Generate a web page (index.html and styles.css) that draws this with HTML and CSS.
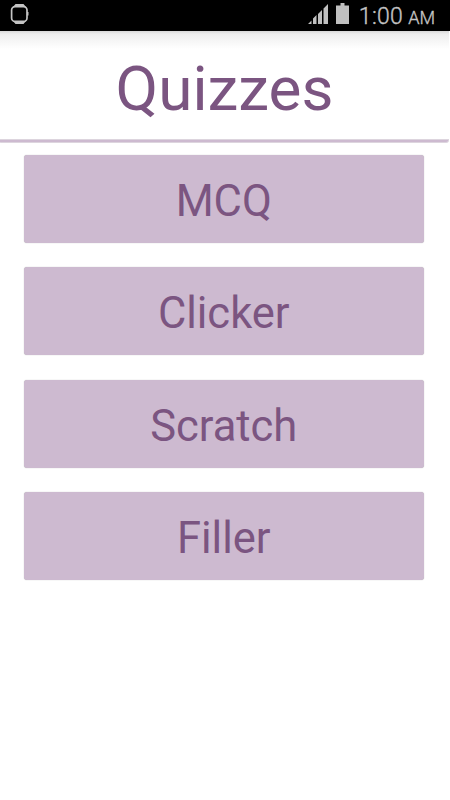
FILE: index.html
```html
<!DOCTYPE html>
<html lang="en">
<head>
<meta charset="utf-8">
<title>Quizzes</title>
<link rel="stylesheet" href="styles.css">
</head>
<body>
<div class="status">
  <svg class="watch" width="20" height="20" viewBox="0 0 20 20"><path d="M6.500 0h8L17 3H4zM4 17h13l-2.500 3h-8zM18 8h1.500v3.500H18z" fill="#c4c4c4"/><rect x="2.600" y="2.600" width="15.400" height="14.800" rx="3.500" fill="#000" stroke="#c4c4c4" stroke-width="1.700"/></svg>
  <svg class="signal" width="20" height="20" viewBox="0 0 20 20"><path d="M0 20l3.500-3.500V20zM5 20v-5.500l3.500-3.500v9zM10 20V10l4-4v14zM15.500 20V4.500L20 0v20z" fill="#c0c0c0"/></svg>
  <svg class="battery" width="13" height="21" viewBox="0 0 13 21"><path d="M4.500 0h4v2.500H13V21H0V2.500h4.500z" fill="#c0c0c0"/></svg>
  <span class="clock">1:00</span><span class="ampm">AM</span>
</div>
<header class="title"><h1>Quizzes</h1></header>
<div class="rule"></div>
<main class="list">
  <button class="item">MCQ</button>
  <button class="item">Clicker</button>
  <button class="item">Scratch</button>
  <button class="item">Filler</button>
</main>
</body>
</html>
```

FILE: styles.css
```css
* { box-sizing: border-box; }
body { margin: 0; width: 450px; height: 800px; overflow: hidden; background: #fff; font-family: Roboto, sans-serif; }
.status { height: 31px; background: #000; display: flex; align-items: baseline; padding: 3px 15px 0 9px; color: #c4c4c4; }
.signal { margin-left: auto; }
.battery { margin: 0 9.5px 0 8px; }
.clock { font-size: 23px; font-weight: 300; line-height: 20px; letter-spacing: .3px; -webkit-text-stroke: .35px #c4c4c4; }
.ampm { font-size: 18px; font-weight: 300; margin-left: 5px; line-height: 20px; -webkit-text-stroke: .35px #c4c4c4; }
.title { width: 449px; height: 108px; padding-top: 6px; background: linear-gradient(#d8d8d8 0, #ededed 3px, #f6f6f6 10px, #fff 18px); display: flex; align-items: center; justify-content: center; }
h1 { margin: 0; font-size: 62px; font-weight: 400; line-height: 75px; color: #7b5581; }
.rule { width: 449px; height: 4px; border: 1px solid #ddd5de; border-left: 0; border-radius: 0 0 3px 1px; background: #cdbad0; }
.list { display: flex; flex-direction: column; gap: 24.5px; padding: 11.5px 26px 0 23.5px; }
.item { height: 88px; border: 0; border-radius: 3px; background: #cdbad0; color: #7b5581; font: 400 43.5px Roboto, sans-serif; padding: 5px 0 0; box-shadow: 0 0 1px #aaa; }
```
